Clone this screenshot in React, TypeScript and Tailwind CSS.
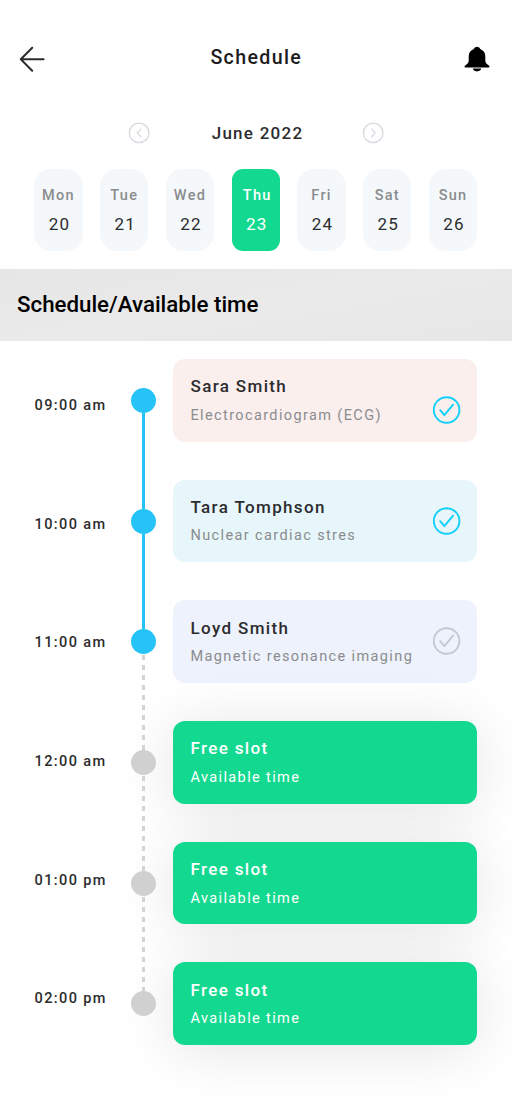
import React from "react";

type Day = { name: string; date: string; active?: boolean };
type Status = "done" | "pending" | "free";
type Slot = { title: string; detail: string; color: string; status: Status; checkPos?: string };

const days: Day[] = [
  { name: "Mon", date: "20" },
  { name: "Tue", date: "21" },
  { name: "Wed", date: "22" },
  { name: "Thu", date: "23", active: true },
  { name: "Fri", date: "24" },
  { name: "Sat", date: "25" },
  { name: "Sun", date: "26" },
];

const times = ["09:00 am", "10:00 am", "11:00 am", "12:00 am", "01:00 pm", "02:00 pm"];

const slots: Slot[] = [
  { title: "Sara Smith", detail: "Electrocardiogram (ECG)", color: "bg-[#fbefee]", status: "done", checkPos: "mt-[37.5px]" },
  { title: "Tara Tomphson", detail: "Nuclear cardiac stres", color: "bg-[#e7f6fa]", status: "done", checkPos: "mt-[27.5px]" },
  { title: "Loyd Smith", detail: "Magnetic resonance imaging", color: "bg-[#eef2fc]", status: "pending", checkPos: "mt-[27.2px]" },
  { title: "Free slot", detail: "Available time", color: "bg-[#13d990]", status: "free" },
  { title: "Free slot", detail: "Available time", color: "bg-[#13d990]", status: "free" },
  { title: "Free slot", detail: "Available time", color: "bg-[#13d990]", status: "free" },
];

function BackArrow() {
  return (
    <svg width="26" height="26" viewBox="0 0 26 26" fill="none" stroke="#2c2c2e" strokeWidth="2" strokeLinecap="round" strokeLinejoin="round">
      <path d="M24.6 13.3H1.8M13.2 1.8L1.8 13.3L13.2 24.8" />
    </svg>
  );
}

function Bell() {
  return (
    <svg width="26" height="26" viewBox="0 0 26 26" fill="#000">
      <path d="M13 .8c-1.6 0-2.9 1-3.2 2.3C6.6 4.3 4.7 6.9 4.7 10.2v4.3c0 1.7-.8 2.9-2.3 4.1C1 19.6.5 20.2.5 20.8c0 .5.4.7 1 .7h23c.6 0 1-.2 1-.7 0-.6-.5-1.2-1.9-2.2-1.5-1.2-2.3-2.4-2.3-4.1v-4.3c0-3.3-1.900-5.900-5.100-7.100C15.900 1.800 14.600.8 13 .8z" />
      <path d="M8.8 22.6h8.400c0 1.600-1.900 2.800-4.200 2.800s-4.200-1.200-4.200-2.800z" />
    </svg>
  );
}

function CircleChevron({ flip }: { flip?: boolean }) {
  return (
    <svg width="22" height="22" viewBox="0 0 22 22" fill="none" stroke="#d7d8e0" strokeWidth="1.3" strokeLinecap="round" strokeLinejoin="round">
      <circle cx="11.1" cy="10.9" r="9.8" />
      <path d={flip ? "M9.7 7.1L13.3 10.9L9.7 14.7" : "M12.9 7.1L9.1 10.9L12.9 14.7"} />
    </svg>
  );
}

function Check({ done }: { done: boolean }) {
  return (
    <svg width="28" height="28" viewBox="0 0 28 28" fill="none" stroke={done ? "#0fcffb" : "#c5c8d0"} strokeWidth="1.9" strokeLinecap="round" strokeLinejoin="round">
      <circle cx="13.6" cy="14" r="12.8" />
      <path d="M7.2 14.2L11.3 19.2L20.1 8.7" />
    </svg>
  );
}

function DayPill({ day }: { day: Day }) {
  return (
    <div
      className={
        day.active
          ? "flex h-[82px] w-[48.2px] flex-col items-center rounded-[11px] bg-[#13d990] pt-[17px] text-white"
          : "flex h-[82px] w-[48.2px] flex-col items-center rounded-[17px] bg-[#f4f8fb] pt-[17px] text-[#2c2c2e]"
      }
    >
      <span className={day.active ? "pl-[3px] text-[14.5px] leading-5 font-medium tracking-[1.3px]" : "text-[14.5px] leading-5 font-medium tracking-[1.3px] text-[#8a8c8e]"}>
        {day.name}
      </span>
      <span className="mt-[7px] pl-[2px] text-[17px] leading-[22px] tracking-[1.2px]">{day.date}</span>
    </div>
  );
}

function SlotCard({ slot }: { slot: Slot }) {
  const free = slot.status === "free";
  return (
    <div className={`flex h-[82.8px] justify-between rounded-[12px] pr-[16.5px] pl-[17.5px] ${slot.color} ${free ? "shadow-[0_5px_58px_rgba(0,0,0,0.11)]" : ""}`}>
      <div className="pt-[15.4px] whitespace-nowrap">
        <div className={`text-[17px] leading-[24px] font-medium tracking-[1.36px] ${free ? "text-white" : "text-[#2c2c2e]"}`}>{slot.title}</div>
        <div className={`mt-[6.5px] text-[14.5px] leading-[21px] tracking-[1.38px] ${free ? "text-white" : "text-[#8a8c8e]"}`}>{slot.detail}</div>
      </div>
      {!free && (
        <div className={`-ml-8 shrink-0 ${slot.checkPos}`}>
          <Check done={slot.status === "done"} />
        </div>
      )}
    </div>
  );
}

function Timeline() {
  return (
    <div className="flex w-[25px] flex-col items-center pt-[46.7px]">
      {slots.map((slot, i) => (
        <React.Fragment key={i}>
          <div className={`h-[25px] w-[25px] shrink-0 rounded-full ${slot.status === "free" ? "bg-[#d0d0d0]" : "bg-[#26c4f6]"}`} />
          {i < 2 && <div className="h-[95.7px] w-[3px] shrink-0 bg-[#26c4f6]" />}
          {i >= 2 && i < 5 && (
            <div className="h-[95.7px] w-[3px] shrink-0 bg-[repeating-linear-gradient(to_bottom,transparent_0px,transparent_1px,#d4d4d4_1px,#d4d4d4_6px,transparent_6px,transparent_10px)]" />
          )}
        </React.Fragment>
      ))}
    </div>
  );
}

export default function App() {
  return (
    <div className="flex h-[1108px] w-[512px] flex-col overflow-hidden bg-white font-['Roboto',sans-serif]">
      <header className="flex items-center justify-between pt-[46px] pr-[21.5px] pl-[19px]">
        <BackArrow />
        <h1 className="-mt-[2px] pl-[3px] text-[19.6px] leading-6 font-medium tracking-[1.35px] text-[#1c1c1e]">Schedule</h1>
        <Bell />
      </header>

      <div className="mt-[50px] flex h-[22px] items-center justify-between pr-[128px] pl-[128px]">
        <CircleChevron />
        <span className="pl-[3px] text-[17px] leading-[22px] font-medium tracking-[1.25px] text-[#2c2c2e]">June 2022</span>
        <CircleChevron flip />
      </div>

      <div className="mt-[25.2px] flex justify-between pr-[34.8px] pl-[34.4px]">
        {days.map((day) => (
          <DayPill key={day.name} day={day} />
        ))}
      </div>

      <div className="mt-[17.5px] flex h-[72.5px] shrink-0 items-center bg-[linear-gradient(170deg,#e6e6e6,#eaeaea_50%,#e7e7e7)] pl-[17px]">
        <h2 className="-mt-px text-[22.3px] leading-7 font-medium text-black">Schedule/Available time</h2>
      </div>

      <div className="flex flex-1">
        <div className="flex w-[130.8px] shrink-0 flex-col gap-[98.7px] pt-[54.8px] pl-[34.5px]">
          {times.map((time) => (
            <span key={time} className="text-[14.5px] leading-5 font-medium tracking-[1.4px] whitespace-nowrap text-[#2c2c2e]">
              {time}
            </span>
          ))}
        </div>
        <div className="relative z-10">
          <Timeline />
        </div>
        <div className="ml-[17.2px] flex w-[304.3px] flex-col gap-[37.9px] pt-[17.7px]">
          {slots.map((slot, i) => (
            <SlotCard key={i} slot={slot} />
          ))}
        </div>
      </div>
    </div>
  );
}
